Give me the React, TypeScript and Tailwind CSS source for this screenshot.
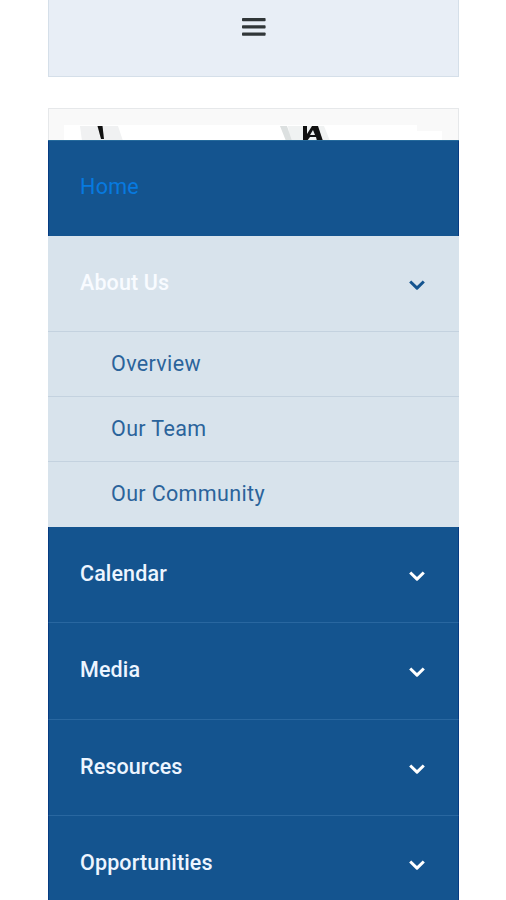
import React, { useState } from 'react'

interface MenuItem {
  label: string
  size: string
  active?: boolean
  children?: string[]
}

const menuItems: MenuItem[] = [
  { label: 'Home', size: 'h-[95px] pb-[3px]', active: true },
  {
    label: 'About Us',
    size: 'h-[95px]',
    children: ['Overview', 'Our Team', 'Our Community'],
  },
  { label: 'Calendar', size: 'h-[95px]', children: [] },
  { label: 'Media', size: 'h-[97px] pb-px', children: [] },
  { label: 'Resources', size: 'h-24 pb-px', children: [] },
  { label: 'Opportunities', size: 'h-24 pb-px', children: [] },
]

const Chevron: React.FC = () => (
  <svg viewBox="0 0 18 12" className="mt-[3px] h-3 w-[18px]" fill="none" stroke="currentColor">
    <path d="M2.2 2.5 9 9.1l6.8-6.6" strokeWidth="3" strokeLinejoin="round" />
  </svg>
)

const Header: React.FC = () => (
  <header className="flex h-[77px] shrink-0 justify-center border-x border-b border-[#d5dfe9] bg-[#e8eef6] pt-[17px]">
    <button aria-label="Menu" className="h-5 w-6 text-[#303638]">
      <svg viewBox="0 0 24 20" className="h-5 w-6" fill="currentColor">
        <rect x="0" y="1" width="23.6" height="3.3" rx="0.8" />
        <rect x="0" y="8.3" width="23.6" height="3.3" rx="0.8" />
        <rect x="0" y="15.5" width="23.6" height="3.3" rx="0.8" />
      </svg>
    </button>
  </header>
)

// Top edge of the slide that stays visible above the open menu
const Banner: React.FC = () => (
  <div className="mt-[31px] h-[33px] shrink-0 border-x border-t border-[#e6e8ea] bg-[#f9f9f9] pl-[15px] pt-4">
    <svg viewBox="0 0 378 16" className="h-4 w-[378px]">
      <rect x="0" y="0" width="353" height="16" fill="#fff" />
      <rect x="353" y="6" width="25" height="10" fill="#fff" />
      <path d="M16 1h38l5 15H18z" fill="#f0f1f2" />
      <path d="M33.500 1h5l1.500 13h-3z" fill="#111" />
      <path d="M224 1h36l6 15h-40z" fill="#f0f2f2" />
      <path d="M216 1h7l5 15h-6z" fill="#dce0e0" />
      <path d="M239 1h4v8l5-8h6l5 15h-6l-1-4h-6l-3 4h-4z" fill="#111" />
      <path d="m249 5-3 5h5z" fill="#eceeef" />
    </svg>
  </div>
)

const App: React.FC = () => {
  const [open, setOpen] = useState('About Us')

  return (
    <div className="flex h-[900px] flex-col overflow-hidden bg-white pl-12 pr-[47px] font-['Roboto',sans-serif]">
      <Header />
      <Banner />
      <nav className="-mt-px border-t border-[#256a9c]">
        {menuItems.map((item, index) => {
          const isOpen = open === item.label

          return (
            <div key={item.label}>
              <button
                className={`flex w-full items-center justify-between text-left text-[21.5px] tracking-[0.12px] ${item.size} ${
                  isOpen
                    ? 'bg-[#d8e3ec] pl-8 pr-[33px]'
                    : 'border-x border-l-[#073b82] border-r-[#073b82] bg-[#14548f] pl-[31px] pr-8'
                } ${index > 2 && !isOpen ? 'border-t border-t-[#2967a0]' : ''}`}
                onClick={() => setOpen(isOpen ? '' : item.label)}
              >
                <span
                  className={
                    item.active
                      ? 'tracking-[0.3px] text-[#077ae0]'
                      : isOpen
                        ? 'font-medium text-[#f8fbff]'
                        : 'font-medium text-[#edf5ff]'
                  }
                >
                  {item.label}
                </span>
                {item.children && (
                  <span className={isOpen ? 'text-[#14548f]' : 'text-white'}>
                    <Chevron />
                  </span>
                )}
              </button>
              {isOpen && (
                <div className="bg-[#d8e3ec] pb-px">
                  {item.children?.map((child) => (
                    <a
                      key={child}
                      href="#"
                      className="flex h-[65px] items-center border-t border-[#c4d2df] pl-[63px] text-[21.5px] tracking-[0.35px] text-[#2b639b]"
                    >
                      {child}
                    </a>
                  ))}
                </div>
              )}
            </div>
          )
        })}
      </nav>
    </div>
  )
}

export default App
